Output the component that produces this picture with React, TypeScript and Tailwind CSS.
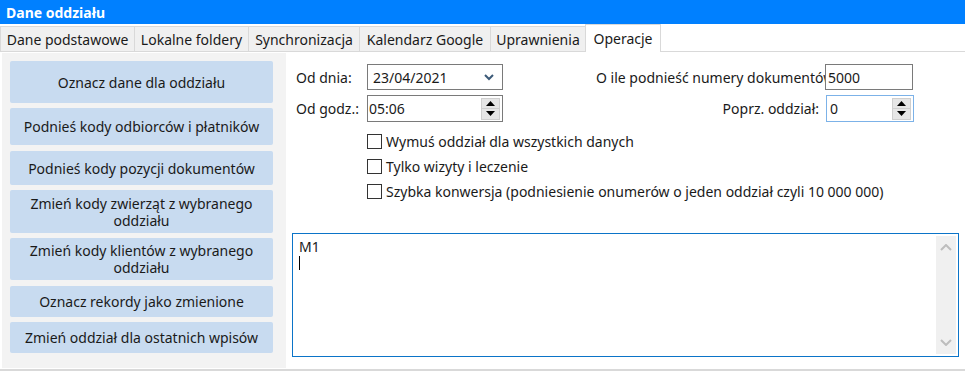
import React from "react";

const tabs = [
  { label: "Dane podstawowe", w: "w-[135px]" },
  { label: "Lokalne foldery", w: "w-[115px]" },
  { label: "Synchronizacja", w: "w-[112px]" },
  { label: "Kalendarz Google", w: "w-[132px]" },
  { label: "Uprawnienia", w: "w-[96px]" },
];

const actions = [
  { label: "Oznacz dane dla oddziału", cls: "h-[42px] mt-0" },
  { label: "Podnieś kody odbiorców i płatników", cls: "h-[37px] mt-[5px]" },
  { label: "Podnieś kody pozycji dokumentów", cls: "h-[34px] mt-[6px]" },
  { label: "Zmień kody zwierząt z wybranego oddziału", cls: "h-[43px] mt-[5px]" },
  { label: "Zmień kody klientów z wybranego oddziału", cls: "h-[42px] mt-[5px]" },
  { label: "Oznacz rekordy jako zmienione", cls: "h-[31px] mt-[6px]" },
  { label: "Zmień oddział dla ostatnich wpisów", cls: "h-[31px] mt-[5px]" },
];

const options = [
  "Wymuś oddział dla wszystkich danych",
  "Tylko wizyty i leczenie",
  "Szybka konwersja (podniesienie onumerów o jeden oddział czyli 10 000 000)",
];

const Spinner: React.FC = () => (
  <div className="flex flex-col w-[19px] h-[22px] mr-[2px]">
    <div className="flex-1 flex items-center justify-center bg-[#e6e6e6] border border-[#cfcfcf]">
      <svg width="9" height="5" viewBox="0 0 9 5">
        <path d="M0 5 L4.5 0 L9 5 Z" fill="#000" />
      </svg>
    </div>
    <div className="flex-1 flex items-center justify-center bg-[#e6e6e6] border border-t-0 border-[#cfcfcf]">
      <svg width="9" height="5" viewBox="0 0 9 5">
        <path d="M0 0 L9 0 L4.5 5 Z" fill="#000" />
      </svg>
    </div>
  </div>
);

const App: React.FC = () => {
  return (
    <div className="w-[965px] h-[371px] bg-white overflow-hidden font-['Noto_Sans',sans-serif] text-[14px] text-[#1a1a1a]">
      {/* title bar */}
      <div className="h-[24px] bg-[#0080ff] text-white font-bold text-[14px] pl-[6px] flex items-center">
        Dane oddziału
      </div>

      {/* tabs */}
      <div className="flex items-end h-[28px] pl-[1px] relative">
        <div className="absolute left-0 right-0 bottom-0 border-b border-[#d9d9d9]" />
        {tabs.map((t) => (
          <div
            key={t.label}
            className={`${t.w} h-[26px] bg-[#f0f0f0] border border-[#d9d9d9] -ml-px first:ml-0 flex items-center justify-center whitespace-nowrap`}
          >
            {t.label}
          </div>
        ))}
        <div className="w-[76px] h-[28px] bg-white border border-b-0 border-[#d9d9d9] -ml-px flex items-center justify-center relative z-10">
          Operacje
        </div>
      </div>

      <div className="flex">
        {/* left action panel */}
        <div className="w-[284px] h-[315px] ml-[2px] mt-px bg-[#f3f3f3] pt-[8px] pl-[8px]">
          {actions.map((a) => (
            <div
              key={a.label}
              className={`${a.cls} w-[263px] rounded-[2px] bg-[#c8dbf0] flex items-center justify-center text-center leading-[17px] px-[3px]`}
            >
              {a.label}
            </div>
          ))}
        </div>

        {/* right side */}
        <div className="flex-1 pt-[12px] pl-[10px]">
          <div className="flex items-center h-[26px]">
            <span className="w-[71px]">Od dnia:</span>
            <div className="w-[136px] h-[26px] border border-[#7a7a7a] flex items-center pl-[5px] pr-[8px] justify-between">
              <span>23/04/2021</span>
              <svg width="10" height="7" viewBox="0 0 10 7">
                <path d="M1 1 L5 5 L9 1" stroke="#3c5a78" strokeWidth="2" fill="none" />
              </svg>
            </div>
            <div className="w-[229px] ml-[93px] overflow-hidden whitespace-nowrap">
              O ile podnieść numery dokumentów
            </div>
            <div className="w-[88px] h-[26px] border border-[#7a7a7a] flex items-center pl-[2px]">
              5000
            </div>
          </div>

          <div className="flex items-center h-[27px] mt-[5px]">
            <span className="w-[71px]">Od godz.:</span>
            <div className="w-[136px] h-[27px] border border-[#7a7a7a] flex items-center justify-between pl-[1px]">
              <span>05:06</span>
              <Spinner />
            </div>
            <div className="w-[323px] text-right pr-[7px]">Poprz. oddział:</div>
            <div className="w-[88px] h-[27px] border border-[#7cb2e8] flex items-center justify-between pl-[3px]">
              <span>0</span>
              <Spinner />
            </div>
          </div>

          <div className="ml-[71px] mt-[9px] flex flex-col gap-[5px]">
            {options.map((o) => (
              <label key={o} className="flex items-center h-[20px] gap-[4px]">
                <span className="w-[15px] h-[15px] border border-[#333] bg-white" />
                <span>{o}</span>
              </label>
            ))}
          </div>

          <div className="mt-[32px] ml-[-4px] mr-[6px] h-[124px] border border-[#0b74c8] flex">
            <div className="flex-1 pl-[6px] pt-[4px] leading-[17px]">
              <div>M1</div>
              <div className="w-px h-[14px] bg-black mt-[1px]" />
            </div>
            <div className="w-[20px] my-[2px] mr-[2px] bg-[#f0f0f0] flex flex-col items-center justify-between py-[8px]">
              <svg width="12" height="7" viewBox="0 0 12 7">
                <path d="M1 6 L6 1 L11 6" stroke="#bdbdbd" strokeWidth="2" fill="none" />
              </svg>
              <svg width="12" height="7" viewBox="0 0 12 7">
                <path d="M1 1 L6 6 L11 1" stroke="#bdbdbd" strokeWidth="2" fill="none" />
              </svg>
            </div>
          </div>
        </div>
      </div>
      <div className="h-[2px] bg-[#d9d9d9] mt-[1px]" />
    </div>
  );
};

export default App;
